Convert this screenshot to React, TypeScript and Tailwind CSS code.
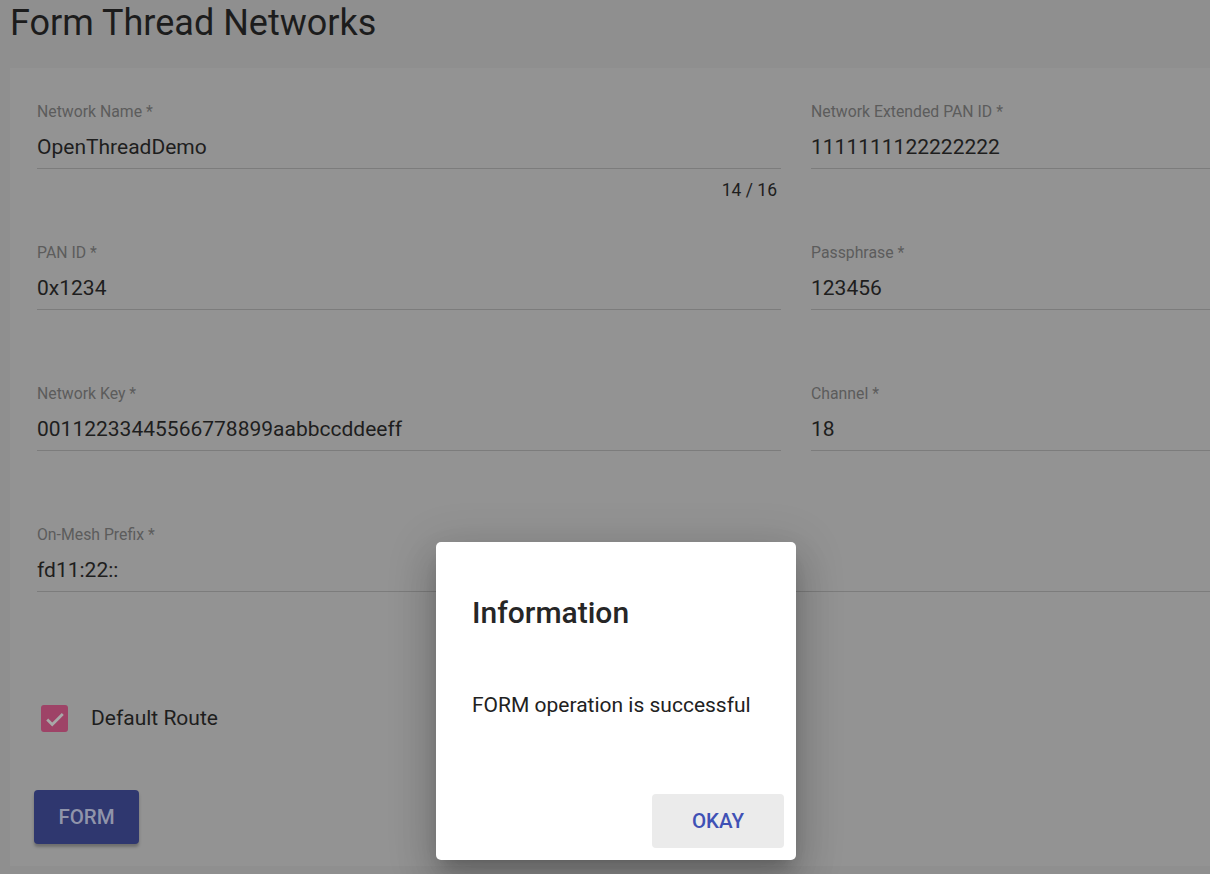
import React from "react";

type FieldProps = { label: string; value: string; hint?: string; wide?: boolean };

function Field({ label, value, hint, wide }: FieldProps) {
  return (
    <div className={"flex h-[141px] flex-col " + (wide ? "col-span-2" : "")}>
      <div className="h-5 text-[15.8px] leading-5 text-[#5c5c5c]">{label}</div>
      <div className="mt-[12px] h-[26px] text-[21px] leading-[26px] text-[#1e1e1e]">{value}</div>
      <div className="mt-[8px] h-px bg-[#7c7c7c]" />
      {hint ? (
        <div className="mt-[11px] h-5 pr-[4px] text-right text-[17.5px] leading-5 text-[#1e1e1e]">{hint}</div>
      ) : null}
    </div>
  );
}

export default function App() {
  return (
    <div
      className="relative h-[874px] w-[1210px] overflow-hidden bg-[#8f8f8f]"
      style={{ fontFamily: "Roboto, 'Noto Sans', sans-serif" }}
    >
      <h1 className="ml-[10px] mt-[3px] h-[40px] text-[36px] font-normal leading-[40px] text-[#1c1c1c]">
        Form Thread Networks
      </h1>
      <div className="ml-[10px] mt-[25px] h-[798px] w-[1400px] bg-[#939393] pl-[27px] pt-[34px]">
        <div className="grid grid-cols-[744px_744px] gap-x-[30px]">
          <Field label="Network Name *" value="OpenThreadDemo" hint="14 / 16" />
          <Field label="Network Extended PAN ID *" value="1111111122222222" />
          <Field label="PAN ID *" value="0x1234" />
          <Field label="Passphrase *" value="123456" />
          <Field label="Network Key *" value="00112233445566778899aabbccddeeff" />
          <Field label="Channel *" value="18" />
          <Field label="On-Mesh Prefix *" value="fd11:22::" wide />
        </div>
        <div className="ml-[4px] mt-[39px] flex h-[27px] items-center">
          <div className="flex h-[27px] w-[27px] items-center justify-center rounded-[3px] bg-[#9e4367]">
            <svg width="22" height="22" viewBox="0 0 24 24" fill="none">
              <path d="M3.5 12.5l5.5 5.5L20.5 6.5" stroke="#a8a8a8" strokeWidth="3" />
            </svg>
          </div>
          <span className="ml-[23px] text-[21px] leading-[27px] text-[#1e1e1e]">Default Route</span>
        </div>
        <button className="-ml-[3px] mt-[58px] flex h-[54px] w-[105px] items-center justify-center rounded-[4px] bg-[#2f376f] text-[20.5px] font-medium text-[#9094aa] shadow-[0_3px_3px_rgba(0,0,0,0.25)]">
          FORM
        </button>
      </div>

      <div className="absolute left-[436px] top-[542px] flex h-[318px] w-[360px] flex-col rounded-[5px] bg-white shadow-[0_11px_15px_-7px_rgba(0,0,0,0.2),0_24px_38px_3px_rgba(0,0,0,0.14),0_9px_46px_8px_rgba(0,0,0,0.12)]">
        <div className="ml-[36px] mt-[53px] text-[30px] font-medium leading-[36px] text-[#262626]">Information</div>
        <div className="ml-[36px] mt-[61px] text-[21px] leading-[26px] text-[#212121]">FORM operation is successful</div>
        <div className="mt-auto flex justify-end pb-[12px] pr-[12px]">
          <button className="h-[54px] w-[132px] rounded-[4px] bg-[#ebebeb] text-[20.5px] font-medium text-[#3f51b5]">
            OKAY
          </button>
        </div>
      </div>
    </div>
  );
}
